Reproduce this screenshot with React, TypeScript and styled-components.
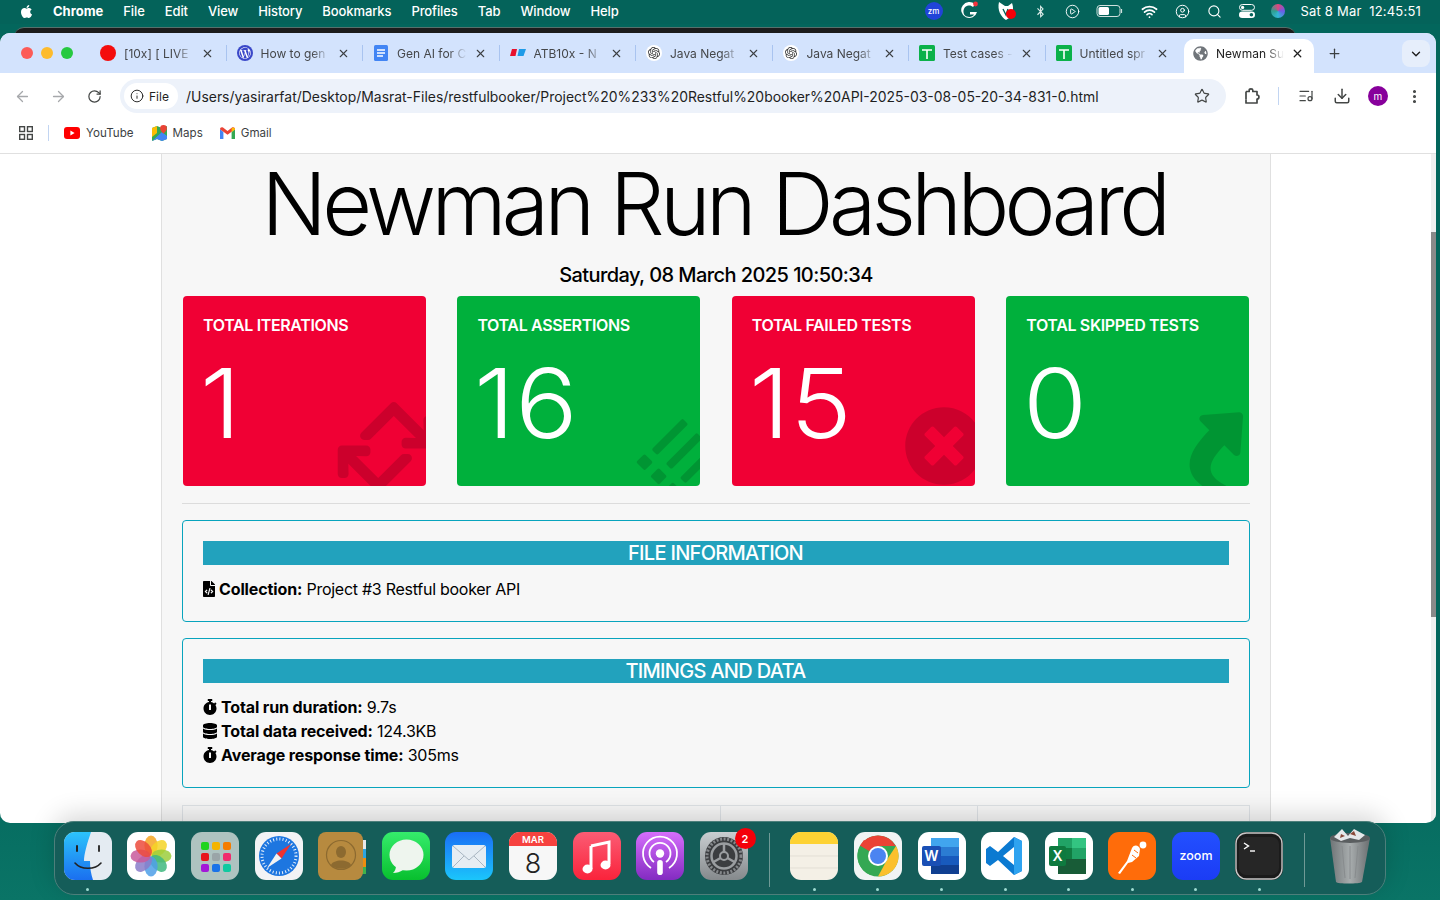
import React from "react";
import styled, { createGlobalStyle } from "styled-components";
import { FaApple, FaBluetoothB, FaDatabase, FaFileCode, FaGlobeAmericas, FaList, FaRetweet, FaShare, FaStopwatch, FaTimesCircle, FaWordpressSimple } from "react-icons/fa";
import { SiOpenai } from "react-icons/si";
import { ArrowLeft, ArrowRight, CirclePlay, CircleUser, Download, EllipsisVertical, Info, ChevronDown, Plus, RotateCw, Search, Star, Wifi, X, ListMusic } from "lucide-react";

const GlobalStyle = createGlobalStyle`
  html, body { margin: 0; padding: 0; height: 100%; overflow: hidden; }
  body { font-family: Inter, "Liberation Sans", sans-serif; }
  * { box-sizing: border-box; }
`;

const Desktop = styled.div`
  position: relative;
  width: 1440px;
  height: 900px;
  overflow: hidden;
  background: linear-gradient(180deg, #03665c 0%, #03665c 80%, #0a7466 100%);
`;

const MenuBar = styled.div`
  height: 24px;
  display: flex;
  align-items: center;
  padding: 0 19px 2px 19px;
  color: #fff;
  font-size: 13px;
  font-weight: 500;
  background: #04635a;
`;

const MenuItems = styled.div`
  display: flex;
  align-items: center;
  gap: 20px;
  margin-left: 20px;
  letter-spacing: -0.1px;
`;

const AppName = styled.span`
  font-weight: 700;
  margin-left: 19px;
`;

const StatusArea = styled.div`
  margin-left: auto;
  display: flex;
  align-items: center;
  height: 24px;
`;

const StatusIcon = styled.span<{ $w: number }>`
  width: ${(p) => p.$w}px;
  display: flex;
  align-items: center;
  justify-content: center;
`;

const Clock = styled.span`
  margin-left: 4px;
  white-space: pre;
  font-weight: 400;
  font-size: 13px;
  letter-spacing: 0.2px;
`;

const Siri = styled.span`
  width: 14px;
  height: 14px;
  border-radius: 50%;
  background: conic-gradient(#e0457b, #6b5be6, #31b7d6, #2f9e8f, #e0457b);
`;

const ZmBadge = styled.span`
  width: 18px;
  height: 18px;
  border-radius: 50%;
  background: #2144d8;
  font-size: 8px;
  font-weight: 500;
  display: flex;
  align-items: center;
  justify-content: center;
`;

const BackWindow = styled.div`
  position: absolute;
  left: 14px;
  top: 27px;
  width: 1282px;
  height: 12px;
  background: #1c1c1c;
  border-radius: 10px 10px 0 0;
  border-top: 1px solid #55706c;
`;

const Window = styled.div`
  position: absolute;
  left: 0;
  top: 33px;
  width: 1436px;
  height: 790px;
  border-radius: 10px;
  overflow: hidden;
  background: #fff;
  display: flex;
  flex-direction: column;
`;

const TabStrip = styled.div`
  height: 40px;
  background: #d3e3fd;
  display: flex;
  align-items: flex-end;
  flex: none;
`;

const Traffic = styled.div`
  width: 90px;
  height: 40px;
  display: flex;
  align-items: center;
  gap: 8px;
  padding-left: 21px;
  flex: none;
`;

const Light = styled.span<{ $c: string }>`
  width: 12px;
  height: 12px;
  border-radius: 50%;
  background: ${(p) => p.$c};
`;

const Tab = styled.div<{ $sep: boolean }>`
  position: relative;
  height: 34px;
  flex: none;
  display: flex;
  align-items: center;
  padding: 0 13px 6px 10px;
  font-size: 12px;
  color: #45474a;
  width: 136.5px;
  &::after {
    content: "";
    display: ${(p) => (p.$sep ? "block" : "none")};
    position: absolute;
    right: 0;
    top: 6px;
    width: 1px;
    height: 16px;
    background: #a9c4f0;
  }
`;

const ActiveTab = styled.div`
  height: 34px;
  flex: none;
  width: 130px;
  margin-left: 2px;
  display: flex;
  align-items: center;
  padding: 0 10px 6px 8px;
  font-size: 12px;
  color: #1f1f1f;
  background: #fff;
  border-radius: 10px 10px 0 0;
`;

const Favicon = styled.span`
  width: 16px;
  height: 16px;
  flex: none;
  display: flex;
  align-items: center;
  justify-content: center;
`;

const RoundFav = styled.span<{ $bg: string }>`
  width: 16px;
  height: 16px;
  border-radius: 50%;
  background: ${(p) => p.$bg};
  display: flex;
  align-items: center;
  justify-content: center;
`;

const TabTitle = styled.span`
  flex: 1;
  margin: 0 5px 0 8px;
  white-space: nowrap;
  overflow: hidden;
  -webkit-mask-image: linear-gradient(90deg, #000 72%, transparent 97%);
  mask-image: linear-gradient(90deg, #000 72%, transparent 97%);
`;

const NewTab = styled.span`
  width: 40px;
  height: 40px;
  flex: none;
  display: flex;
  align-items: center;
  justify-content: center;
  color: #3c4043;
`;

const TabSearch = styled.span`
  margin: 0 6px 6px auto;
  width: 28px;
  height: 27px;
  border-radius: 8px;
  background: #e6eefb;
  display: flex;
  align-items: center;
  justify-content: center;
  color: #1f1f1f;
`;

const Toolbar = styled.div`
  height: 44px;
  flex: none;
  display: flex;
  align-items: center;
  padding: 2px 0 0 4px;
  color: #444746;
`;

const NavButton = styled.span<{ $w?: number; $dim?: boolean }>`
  width: ${(p) => p.$w ?? 36}px;
  height: 32px;
  flex: none;
  display: flex;
  align-items: center;
  justify-content: center;
  color: ${(p) => (p.$dim ? "#a6a8ab" : "#444746")};
`;

const Omnibox = styled.div`
  width: 1106px;
  height: 34px;
  margin-left: 8px;
  border-radius: 17px;
  background: #edf2fa;
  display: flex;
  align-items: center;
  padding: 0 16px 0 4px;
  flex: none;
`;

const FileChip = styled.span`
  width: 54px;
  height: 26px;
  border-radius: 13px;
  background: #fff;
  display: flex;
  align-items: center;
  gap: 5px;
  padding-left: 6px;
  font-size: 12px;
  color: #1f1f1f;
`;

const UrlText = styled.span`
  margin-left: 8px;
  font-size: 13.95px;
  color: #1f1f1f;
  white-space: nowrap;
`;

const ToolbarSep = styled.span`
  width: 1px;
  height: 18px;
  background: #c2d5f2;
  flex: none;
`;

const Avatar = styled.span`
  width: 20px;
  height: 20px;
  border-radius: 50%;
  background: #87009b;
  color: #fff;
  font-size: 10px;
  display: flex;
  align-items: center;
  justify-content: center;
`;

const Bookmarks = styled.div`
  height: 37px;
  flex: none;
  display: flex;
  align-items: center;
  padding: 0 0 5px 19px;
  font-size: 11.6px;
  color: #3c3f43;
  border-bottom: 1px solid #e0e0e0;
`;

const BookmarkSep = styled.span`
  width: 1px;
  height: 16px;
  background: #c2d5f2;
  margin: 0 15px 0 15px;
`;

const Bookmark = styled.span<{ $mr: number }>`
  display: flex;
  align-items: center;
  gap: 6px;
  margin-right: ${(p) => p.$mr}px;
`;

const PageArea = styled.div`
  flex: 1;
  min-height: 0;
  display: flex;
`;

const PageScroll = styled.div`
  flex: 1;
  overflow: hidden;
  padding-left: 161px;
`;

const Scrollbar = styled.div`
  width: 5px;
  flex: none;
  background: #f0f0f0;
`;

const ScrollThumb = styled.div`
  margin-top: 78px;
  height: 385px;
  background: #8a8a8a;
`;

const Container = styled.div`
  width: 1110px;
  height: 760px;
  background: #f7f7f7;
  border-left: 1px solid #e0e0e0;
  border-right: 1px solid #e0e0e0;
  padding: 0 20px;
  color: #000;
`;

const Title = styled.h1`
  margin: -2px 0 0;
  padding: 0 4px 0 0;
  text-align: center;
  font-size: 86px;
  font-weight: 300;
  line-height: 105px;
  letter-spacing: -4.6px;
  color: #000;
  white-space: nowrap;
`;

const DateLine = styled.h5`
  margin: 3px 0 6px;
  text-align: center;
  font-size: 20px;
  font-weight: 500;
  line-height: 30px;
  letter-spacing: -0.57px;
`;

const CardGrid = styled.div`
  display: grid;
  grid-template-columns: repeat(4, 1fr);
  gap: 31.6px;
  padding: 0 1px;
`;

const Card = styled.div<{ $bg: string }>`
  position: relative;
  height: 190px;
  overflow: hidden;
  border-radius: 4px;
  background: ${(p) => p.$bg};
  color: #fff;
  padding: 20px;
`;

const CardTitle = styled.h6`
  margin: 0;
  font-size: 16px;
  font-weight: 600;
  line-height: 19px;
  text-transform: uppercase;
  letter-spacing: -0.35px;
`;

const CardNumber = styled.div`
  margin: 11px 0 0 -3px;
  font-size: 96px;
  font-weight: 300;
  line-height: 115px;
  letter-spacing: 0.5px;
  transform: scaleX(1.08);
  transform-origin: left center;
`;

const CardIcon = styled.span<{ $right: number; $bottom: number; $rotate: number }>`
  position: absolute;
  right: ${(p) => p.$right}px;
  bottom: ${(p) => p.$bottom}px;
  display: flex;
  color: rgba(0, 0, 0, 0.15);
  transform: rotate(${(p) => p.$rotate}deg);
`;

const Rule = styled.hr`
  margin: 17px 0 16px;
  border: 0;
  border-top: 1px solid #dcdcdc;
`;

const Panel = styled.section`
  border: 1px solid #08a4bd;
  border-radius: 4px;
  padding: 20px;
  & + & { margin-top: 16px; }
`;

const PanelHeader = styled.h5`
  margin: 0 0 12px;
  padding-right: 1px;
  height: 24px;
  background: #22a2bd;
  color: #fff;
  text-align: center;
  font-size: 20px;
  font-weight: 500;
  line-height: 24px;
  letter-spacing: -0.7px;
  text-transform: uppercase;
`;

const InfoLine = styled.div`
  font-size: 16px;
  line-height: 24px;
  display: flex;
  align-items: center;
  white-space: pre;
  letter-spacing: -0.27px;
`;

const InfoIcon = styled.span<{ $narrow?: boolean }>`
  display: flex;
  margin: ${(p) => (p.$narrow ? "0 2px 0 -2px" : "0 3px 0 -1px")};
`;

const Strong = styled.strong`
  font-weight: 700;
  letter-spacing: -0.12px;
`;

const SummaryRow = styled.div`
  margin-top: 17px;
  height: 60px;
  border: 1px solid #dee2e6;
  display: grid;
  grid-template-columns: 538px 257px 1fr;
`;

const SummaryCell = styled.div`
  border-right: 1px solid #dee2e6;
  &:last-child { border-right: 0; }
`;

const Dock = styled.div`
  position: absolute;
  left: 54px;
  top: 821px;
  width: 1332px;
  height: 74px;
  border-radius: 20px;
  background: #155d59;
  border: 1px solid #4d7f7b;
  box-shadow: 0 -6px 26px rgba(0, 0, 0, 0.16);
  display: flex;
  padding: 10px 0 0 1px;
`;

const DockCell = styled.div`
  position: relative;
  width: 63.6px;
  flex: none;
  display: flex;
  flex-direction: column;
  align-items: center;
`;

const Dot = styled.span<{ $on?: boolean }>`
  width: 3px;
  height: 3px;
  margin-top: 8px;
  border-radius: 50%;
  background: ${(p) => (p.$on ? "#9fdcd2" : "transparent")};
`;

const DockSep = styled.span`
  width: 1px;
  height: 54px;
  margin: 1px 13px 0 13px;
  flex: none;
  background: #6f9a96;
`;

const Badge = styled.span`
  position: absolute;
  top: -4px;
  right: 0;
  width: 21px;
  height: 21px;
  border-radius: 50%;
  background: #f40009;
  color: #fff;
  font-size: 11px;
  font-weight: 600;
  display: flex;
  align-items: center;
  justify-content: center;
`;

const AppIcon = styled.svg`
  display: block;
  overflow: visible;
`;

const Ic = ({ children }: { children: React.ReactNode }) => (
  <AppIcon width="48" height="48" viewBox="0 0 48 48">{children}</AppIcon>
);

const Finder = () => (
  <Ic>
    <defs>
      <linearGradient id="fi" x1="0" y1="0" x2="0" y2="1"><stop offset="0" stopColor="#2cc4fb" /><stop offset="1" stopColor="#1a6ff0" /></linearGradient>
      <clipPath id="fc"><rect width="48" height="48" rx="11" /></clipPath>
    </defs>
    <g clipPath="url(#fc)">
      <rect width="48" height="48" fill="#e4ebf2" />
      <path d="M0 0H27C23 12 20 22 20 29H26C26 36 27 42 29 48H0Z" fill="url(#fi)" />
    </g>
    <path d="M11 31C17 38 31 38 37 31" fill="none" stroke="#222" strokeWidth="1.6" strokeLinecap="round" />
    <rect x="12" y="13" width="2" height="7" rx="1" fill="#222" />
    <rect x="34" y="13" width="2" height="7" rx="1" fill="#333" />
  </Ic>
);

const Photos = () => {
  const colors = ["#f6a623", "#f5d327", "#9cce3c", "#3fb87f", "#4d9fe8", "#8a7cc9", "#c85a9c", "#ec4b3c"];
  return (
    <Ic>
      <rect width="48" height="48" rx="11" fill="#fff" />
      {colors.map((c, i) => (
        <ellipse key={c} cx="24" cy="13.5" rx="6.6" ry="10" fill={c} opacity="0.85" transform={`rotate(${i * 45} 24 24)`} />
      ))}
    </Ic>
  );
};

const Launchpad = () => {
  const colors = ["#1fd41f", "#f5b400", "#f57c00", "#e8141c", "#9aa5a8", "#f02b6d", "#a318d8", "#1a73e8", "#10c9a0"];
  return (
    <Ic>
      <rect width="48" height="48" rx="11" fill="#aec3c0" />
      {colors.map((c, i) => (
        <rect key={c} x={10 + (i % 3) * 11} y={10 + Math.floor(i / 3) * 11} width="8" height="8" rx="2" fill={c} />
      ))}
    </Ic>
  );
};

const Safari = () => (
  <Ic>
    <rect width="48" height="48" rx="11" fill="#f2f3f5" />
    <circle cx="24" cy="24" r="20" fill="#1d76e0" />
    <circle cx="24" cy="24" r="17" fill="none" stroke="#e8f1fb" strokeWidth="3" strokeDasharray="1 2.2" />
    <path d="M36 12L21.5 21.5L26.5 26.5Z" fill="#f0322f" />
    <path d="M12 36L21.5 21.5L26.5 26.5Z" fill="#f3f3f3" />
  </Ic>
);

const Contacts = () => (
  <Ic>
    <rect x="44" y="8" width="4" height="9" fill="#e8e8e8" />
    <rect x="44" y="17" width="4" height="9" fill="#2da5e0" />
    <rect x="44" y="26" width="4" height="9" fill="#ee8d10" />
    <rect x="44" y="35" width="4" height="7" fill="#3eb24b" />
    <rect x="0" width="45" height="48" rx="8" fill="#b78a3f" />
    <circle cx="23" cy="23" r="14.5" fill="none" stroke="#8c6a30" strokeWidth="1.2" />
    <ellipse cx="23" cy="20" rx="5" ry="6" fill="#8c6a30" />
    <path d="M13 33C15 27 31 27 33 33C29 38 17 38 13 33Z" fill="#8c6a30" />
  </Ic>
);

const Messages = () => (
  <Ic>
    <defs><linearGradient id="ms" x1="0" y1="0" x2="0" y2="1"><stop offset="0" stopColor="#35ec6c" /><stop offset="1" stopColor="#08bf2e" /></linearGradient></defs>
    <rect width="48" height="48" rx="11" fill="url(#ms)" />
    <ellipse cx="24.5" cy="23" rx="17" ry="15.5" fill="#eef5ee" />
    <path d="M14 33C14 37 13 39 11 41C15 41 18 40 21 38Z" fill="#eef5ee" />
  </Ic>
);

const Mail = () => (
  <Ic>
    <defs><linearGradient id="ml" x1="0" y1="0" x2="0" y2="1"><stop offset="0" stopColor="#1a6df5" /><stop offset="1" stopColor="#1bc6fb" /></linearGradient></defs>
    <rect width="48" height="48" rx="11" fill="url(#ml)" />
    <rect x="7" y="13" width="34" height="23" rx="2.5" fill="#e6edf3" />
    <path d="M8 14L24 28L40 14M8 35L19 24M40 35L29 24" fill="none" stroke="#a9b6c2" strokeWidth="1" />
  </Ic>
);

const Calendar = () => (
  <Ic>
    <rect width="48" height="48" rx="11" fill="#f7f7f7" />
    <path d="M0 14V11A11 11 0 0 1 11 0H37A11 11 0 0 1 48 11V14Z" fill="#f6423f" />
    <text x="24" y="11" textAnchor="middle" fontSize="9.5" fontWeight="600" fill="#fff" fontFamily="Inter, sans-serif">MAR</text>
    <text x="24" y="41" textAnchor="middle" fontSize="27" fontWeight="300" fill="#222" fontFamily="Inter, sans-serif">8</text>
  </Ic>
);

const Music = () => (
  <Ic>
    <defs><linearGradient id="mu" x1="0" y1="0" x2="0" y2="1"><stop offset="0" stopColor="#fb5c74" /><stop offset="1" stopColor="#fa233b" /></linearGradient></defs>
    <rect width="48" height="48" rx="11" fill="url(#mu)" />
    <path d="M18 14L36 10V32" fill="none" stroke="#fff" strokeWidth="3" />
    <path d="M18 14V37" fill="none" stroke="#fff" strokeWidth="3" />
    <ellipse cx="14.5" cy="37" rx="5" ry="4.4" fill="#fff" />
    <ellipse cx="32.5" cy="33" rx="5" ry="4.4" fill="#fff" />
  </Ic>
);

const Podcasts = () => (
  <Ic>
    <defs><linearGradient id="po" x1="0" y1="0" x2="0" y2="1"><stop offset="0" stopColor="#d56efc" /><stop offset="1" stopColor="#832bc1" /></linearGradient></defs>
    <rect width="48" height="48" rx="11" fill="url(#po)" />
    <path d="M15 36A17 17 0 1 1 33 36" fill="none" stroke="#fff" strokeWidth="1.8" />
    <path d="M18 30A10.5 10.5 0 1 1 30 30" fill="none" stroke="#fff" strokeWidth="1.8" />
    <circle cx="24" cy="21.5" r="4.2" fill="#fff" />
    <rect x="21.2" y="28" width="5.6" height="15" rx="2.8" fill="#fff" />
  </Ic>
);

const Settings = () => (
  <Ic>
    <defs><linearGradient id="se" x1="0" y1="0" x2="0" y2="1"><stop offset="0" stopColor="#c9ced1" /><stop offset="1" stopColor="#85898c" /></linearGradient></defs>
    <rect width="48" height="48" rx="11" fill="url(#se)" />
    <circle cx="24" cy="24" r="19" fill="#3b3d40" />
    <circle cx="24" cy="24" r="17" fill="none" stroke="#85888b" strokeWidth="3" strokeDasharray="2 1.6" />
    <circle cx="24" cy="24" r="12.5" fill="none" stroke="#9a9da0" strokeWidth="2.5" />
    <circle cx="24" cy="24" r="4" fill="none" stroke="#9a9da0" strokeWidth="2" />
    <path d="M24 20V12M27.5 26L34.5 30M20.5 26L13.5 30" stroke="#9a9da0" strokeWidth="2.5" />
  </Ic>
);

const Notes = () => (
  <Ic>
    <rect width="48" height="48" rx="11" fill="#f4f0e6" />
    <path d="M0 12V11A11 11 0 0 1 11 0H37A11 11 0 0 1 48 11V12Z" fill="#fdd233" />
    <path d="M0 24H48M0 36H48" stroke="#e3dfd5" strokeWidth="1" />
  </Ic>
);

const Chrome = () => (
  <Ic>
    <rect width="48" height="48" rx="11" fill="#f1f4f4" />
    <circle cx="24" cy="24" r="20.5" fill="#34a853" />
    <path d="M24 3.5A20.5 20.5 0 0 1 41.8 14L24 14L6.2 14A20.5 20.5 0 0 1 24 3.5Z" fill="#ea4335" />
    <path d="M6 13.8A20.5 20.5 0 0 0 16 42.8L24 24Z" fill="#34a853" />
    <path d="M42 14A20.5 20.5 0 0 1 24 44.5L34 26Z" fill="#fbc02d" />
    <path d="M15 19L6 13.5L10 8L24 14Z" fill="#ea4335" />
    <circle cx="24" cy="24" r="10" fill="#fff" />
    <circle cx="24" cy="24" r="8" fill="#4b84f1" />
  </Ic>
);

const Word = () => (
  <Ic>
    <rect width="48" height="48" rx="11" fill="#fff" />
    <rect x="13" y="6" width="28" height="9" fill="#41a5ee" />
    <rect x="13" y="15" width="28" height="9" fill="#2b7cd3" />
    <rect x="13" y="24" width="28" height="9" fill="#185abd" />
    <rect x="13" y="33" width="28" height="9" fill="#103f91" />
    <rect x="4" y="14" width="19" height="20" rx="2" fill="#1a4fb5" />
    <text x="13.5" y="29" textAnchor="middle" fontSize="14" fontWeight="600" fill="#fff" fontFamily="Inter, sans-serif">W</text>
  </Ic>
);

const VsCode = () => (
  <Ic>
    <rect width="48" height="48" rx="11" fill="#fff" />
    <path d="M33 5L41 9V39L33 43L17 28L9 34L5 31V17L9 14L17 20ZM33 15L22 24L33 33Z" fill="#0b7ad1" />
    <path d="M33 5L41 9V39L33 43Z" fill="#2ea3f0" />
  </Ic>
);

const Excel = () => (
  <Ic>
    <rect width="48" height="48" rx="11" fill="#fff" />
    <rect x="13" y="6" width="14" height="10" fill="#21a366" />
    <rect x="27" y="6" width="14" height="10" fill="#33c481" />
    <rect x="13" y="16" width="14" height="11" fill="#107c41" />
    <rect x="27" y="16" width="14" height="11" fill="#21a366" />
    <rect x="13" y="27" width="28" height="15" fill="#185c37" />
    <rect x="4" y="14" width="17" height="20" rx="2" fill="#0e7a3f" />
    <text x="12.5" y="29" textAnchor="middle" fontSize="14" fontWeight="600" fill="#fff" fontFamily="Inter, sans-serif">X</text>
  </Ic>
);

const Postman = () => (
  <Ic>
    <rect width="48" height="48" rx="11" fill="#ff6c0a" />
    <circle cx="35" cy="13" r="3.4" fill="#fff" />
    <path d="M10 41L19 29L24 16C26 12 31 13 32 17L31 24L24 30L20 31L12 42Z" fill="#fff" />
    <path d="M26 18L30 21M24 23L28 26" stroke="#ff6c0a" strokeWidth="1" />
  </Ic>
);

const ZoomApp = () => (
  <Ic>
    <defs><linearGradient id="zo" x1="0" y1="0" x2="0" y2="1"><stop offset="0" stopColor="#2350ff" /><stop offset="1" stopColor="#1b3cf5" /></linearGradient></defs>
    <rect width="48" height="48" rx="11" fill="url(#zo)" />
    <text x="24" y="28" textAnchor="middle" fontSize="12.5" fontWeight="500" fill="#fff" fontFamily="Inter, sans-serif">zoom</text>
  </Ic>
);

const Terminal = () => (
  <Ic>
    <rect width="48" height="48" rx="11" fill="#1b1b1b" />
    <rect x="1" y="1" width="46" height="46" rx="10.5" fill="none" stroke="#c7c7c7" strokeWidth="1.4" />
    <rect x="4" y="5" width="40" height="38" rx="7" fill="#262626" />
    <path d="M9 11L13.5 14L9 17" fill="none" stroke="#fff" strokeWidth="1.4" />
    <path d="M15 19H20" stroke="#fff" strokeWidth="1.4" />
  </Ic>
);

const Trash = () => (
  <Ic>
    <defs><linearGradient id="tr" x1="0" y1="0" x2="1" y2="0"><stop offset="0" stopColor="#6f7476" /><stop offset="0.5" stopColor="#a8adae" /><stop offset="1" stopColor="#6a6e70" /></linearGradient></defs>
    <path d="M4 6L10 50C11 52 34 52 36 50L44 6Z" fill="url(#tr)" />
    <ellipse cx="24" cy="6" rx="20" ry="5" fill="#5a5e60" />
    <path d="M8 5L16 -3L22 4L28 -3L39 3L33 8L24 6L15 9Z" fill="#e6e8ea" />
    <path d="M24 2L28 -1L30 4ZM15 2L19 4L14 6Z" fill="#8a4a3a" />
    <path d="M16 14L19 46M24 14V47M32 14L29 46" stroke="#888c8e" strokeWidth="1" />
  </Ic>
);

const Grammarly = () => (
  <svg width="20" height="20" viewBox="0 0 20 20">
    <path d="M16 3.5A8 8 0 1 0 18 11H11V13.5H15C14 16 9 17 6 14.5C3 11.5 4.5 5 9.5 4.5C11.5 4.3 13 5 14 6Z" fill="#fff" />
    <circle cx="16.5" cy="3" r="2.4" fill="#f0323c" />
  </svg>
);

const Malware = () => (
  <svg width="22" height="20" viewBox="0 0 22 20">
    <path d="M3 1L9 5H12L16 2C18 7 17 12 13 17L10 19C5 16 1 9 3 1Z" fill="#fff" />
    <path d="M7 8L10 14L12 8" stroke="#04635a" strokeWidth="1.4" fill="none" />
    <circle cx="15" cy="13" r="5" fill="#f40009" />
  </svg>
);

const Battery = () => (
  <svg width="28" height="14" viewBox="0 0 28 14">
    <rect x="1" y="1.5" width="23" height="11" rx="3" fill="none" stroke="#cfe0dd" strokeWidth="1" />
    <rect x="2.5" y="3" width="10.5" height="8" rx="1.6" fill="#fff" />
    <path d="M25.5 5V9" stroke="#cfe0dd" strokeWidth="1.2" />
  </svg>
);

const ControlCentre = () => (
  <svg width="16" height="14" viewBox="0 0 16 14">
    <rect x="0.5" y="0.5" width="15" height="5.8" rx="2.9" fill="none" stroke="#fff" />
    <circle cx="3.6" cy="3.4" r="1.6" fill="#fff" />
    <rect x="0" y="7.6" width="16" height="6.4" rx="3.2" fill="#fff" />
    <circle cx="12.4" cy="10.8" r="1.8" fill="#04635a" />
  </svg>
);

const ExtensionPiece = () => (
  <svg width="18" height="18" viewBox="0 0 18 18" fill="none" stroke="#444746" strokeWidth="1.7" strokeLinejoin="round">
    <path d="M3 4.5H6.2V3.2C6.2 1.4 9.8 1.4 9.8 3.2V4.5H14V8C16.6 8 16.6 12 14 12V16H3V12.5" />
    <path d="M3 4.5V12.5" />
  </svg>
);

const DocsFav = () => (
  <svg width="14" height="16" viewBox="0 0 14 16">
    <rect width="14" height="16" rx="1.5" fill="#4285f4" />
    <path d="M3 5H11M3 8H11M3 11H9" stroke="#fff" strokeWidth="1.5" />
  </svg>
);

const AtbFav = () => (
  <svg width="16" height="10" viewBox="0 0 16 10">
    <path d="M2 1H7L5.5 8H0Z" fill="#e8112d" />
    <path d="M9 1H16L13.5 8H7.5Z" fill="#1e9be8" />
  </svg>
);

const SheetsFav = () => (
  <svg width="16" height="16" viewBox="0 0 16 16">
    <rect width="16" height="16" rx="1.5" fill="#0bb14a" />
    <path d="M3 5H13M8 5V14" stroke="#fff" strokeWidth="1.6" />
  </svg>
);

const YouTubeFav = () => (
  <svg width="16" height="12" viewBox="0 0 16 12">
    <rect width="16" height="12" rx="3" fill="#f00" />
    <path d="M6.4 3.5L10.6 6L6.4 8.5Z" fill="#fff" />
  </svg>
);

const MapsFav = () => (
  <svg width="15" height="16" viewBox="0 0 15 16">
    <path d="M0 3L5 1L10 3L15 1V14L10 16L5 14L0 16Z" fill="#34a853" />
    <path d="M0 3L5 1V8L0 12Z" fill="#fbbc04" />
    <path d="M0 16L10 7L15 11V14L10 16L5 14Z" fill="#4285f4" />
    <path d="M11.5 0A3.4 3.4 0 0 0 8.1 3.4C8.1 5.6 11.5 8.5 11.5 8.5S14.9 5.6 14.9 3.4A3.4 3.4 0 0 0 11.5 0Z" fill="#ea4335" />
  </svg>
);

const GmailFav = () => (
  <svg width="15" height="12" viewBox="0 0 15 12">
    <path d="M0 2V12H3.4V5Z" fill="#4285f4" />
    <path d="M15 2V12H11.6V5Z" fill="#34a853" />
    <path d="M0 2.2C0 .6 1.6 -.4 3 .6L7.5 4L12 .6C13.4 -.4 15 .6 15 2.2L7.5 7.8Z" fill="#ea4335" />
    <path d="M11.6 1V5L15 2.4C15 .8 13.4 -.4 11.6 1Z" fill="#fbbc04" />
  </svg>
);

const AppsGrid = () => (
  <svg width="14" height="14" viewBox="0 0 14 14" fill="none" stroke="#444746" strokeWidth="1.4">
    <rect x="0.7" y="0.7" width="4.8" height="4.8" />
    <rect x="8.5" y="0.7" width="4.8" height="4.8" />
    <rect x="0.7" y="8.5" width="4.8" height="4.8" />
    <rect x="8.5" y="8.5" width="4.8" height="4.8" />
  </svg>
);

const tabs = [
  { title: "[10x] [ LIVE", icon: <RoundFav $bg="#f40d0d" /> },
  { title: "How to gen", icon: <RoundFav $bg="#3a48c9"><FaWordpressSimple size={12} color="#fff" /></RoundFav> },
  { title: "Gen AI for C", icon: <DocsFav /> },
  { title: "ATB10x - N", icon: <AtbFav /> },
  { title: "Java Negat", icon: <RoundFav $bg="#fff"><SiOpenai size={12} color="#333" /></RoundFav> },
  { title: "Java Negat", icon: <RoundFav $bg="#fff"><SiOpenai size={12} color="#333" /></RoundFav> },
  { title: "Test cases -", icon: <SheetsFav /> },
  { title: "Untitled spr", icon: <SheetsFav /> },
];

const menus = ["File", "Edit", "View", "History", "Bookmarks", "Profiles", "Tab", "Window", "Help"];

const cards = [
  { title: "Total Iterations", value: "1", bg: "#f00034", icon: <FaRetweet size={110} />, right: -15, bottom: -16, rotate: -45 },
  { title: "Total Assertions", value: "16", bg: "#00b03c", icon: <FaList size={64} />, right: -9, bottom: -4, rotate: -45 },
  { title: "Total Failed Tests", value: "15", bg: "#f00034", icon: <FaTimesCircle size={80} />, right: -9, bottom: 0, rotate: 0 },
  { title: "Total Skipped Tests", value: "0", bg: "#00b03c", icon: <FaShare size={80} />, right: -10, bottom: -1, rotate: -45 },
];

const dockLeft = [
  { el: <Finder />, on: true }, { el: <Photos /> }, { el: <Launchpad /> }, { el: <Safari /> }, { el: <Contacts /> }, { el: <Messages /> },
  { el: <Mail /> }, { el: <Calendar /> }, { el: <Music /> }, { el: <Podcasts /> }, { el: <Settings />, badge: "2" },
];

const dockRight = [
  <Notes />, <Chrome />, <Word />, <VsCode />, <Excel />, <Postman />, <ZoomApp />, <Terminal />,
];

export default function App() {
  return (
    <Desktop>
      <GlobalStyle />
      <MenuBar>
        <FaApple size={15} />
        <AppName>Chrome</AppName>
        <MenuItems>
          {menus.map((m) => <span key={m}>{m}</span>)}
        </MenuItems>
        <StatusArea>
          <StatusIcon $w={34}><ZmBadge>zm</ZmBadge></StatusIcon>
          <StatusIcon $w={36}><Grammarly /></StatusIcon>
          <StatusIcon $w={40}><Malware /></StatusIcon>
          <StatusIcon $w={28}><FaBluetoothB size={13} color="#dfeeeb" /></StatusIcon>
          <StatusIcon $w={36}><CirclePlay size={15} color="#fff" strokeWidth={1.5} /></StatusIcon>
          <StatusIcon $w={38}><Battery /></StatusIcon>
          <StatusIcon $w={42}><Wifi size={17} color="#fff" strokeWidth={2.4} /></StatusIcon>
          <StatusIcon $w={24}><CircleUser size={15} color="#fff" strokeWidth={1.6} /></StatusIcon>
          <StatusIcon $w={40}><Search size={15} color="#fff" strokeWidth={1.8} /></StatusIcon>
          <StatusIcon $w={24}><ControlCentre /></StatusIcon>
          <StatusIcon $w={38}><Siri /></StatusIcon>
          <Clock>Sat 8 Mar  12:45:51</Clock>
        </StatusArea>
      </MenuBar>
      <BackWindow />
      <Window>
        <TabStrip>
          <Traffic>
            <Light $c="#fc5b57" />
            <Light $c="#fdbb2d" />
            <Light $c="#26c940" />
          </Traffic>
          {tabs.map((t, i) => (
            <Tab key={i} $sep={i < tabs.length - 1}>
              <Favicon>{t.icon}</Favicon>
              <TabTitle>{t.title}</TabTitle>
              <X size={13} strokeWidth={2} color="#3c4043" />
            </Tab>
          ))}
          <ActiveTab>
            <Favicon><FaGlobeAmericas size={15} color="#70757a" /></Favicon>
            <TabTitle>Newman Su</TabTitle>
            <X size={13} strokeWidth={2.4} color="#1f1f1f" />
          </ActiveTab>
          <NewTab><Plus size={15} strokeWidth={2} /></NewTab>
          <TabSearch><ChevronDown size={14} strokeWidth={2.4} /></TabSearch>
        </TabStrip>
        <Toolbar>
          <NavButton $dim><ArrowLeft size={17} strokeWidth={1.8} /></NavButton>
          <NavButton $dim><ArrowRight size={17} strokeWidth={1.8} /></NavButton>
          <NavButton><RotateCw size={15} strokeWidth={2} /></NavButton>
          <Omnibox>
            <FileChip><Info size={14} strokeWidth={1.6} />File</FileChip>
            <UrlText>/Users/yasirarfat/Desktop/Masrat-Files/restfulbooker/Project%20%233%20Restful%20booker%20API-2025-03-08-05-20-34-831-0.html</UrlText>
            <Star size={16} strokeWidth={1.8} color="#444746" style={{ marginLeft: "auto" }} />
          </Omnibox>
          <NavButton $w={52}><ExtensionPiece /></NavButton>
          <ToolbarSep />
          <NavButton $w={54}><ListMusic size={16} strokeWidth={1.8} /></NavButton>
          <NavButton $w={18}><Download size={18} strokeWidth={2} /></NavButton>
          <NavButton $w={54}><Avatar>m</Avatar></NavButton>
          <NavButton $w={18}><EllipsisVertical size={17} strokeWidth={2.4} /></NavButton>
        </Toolbar>
        <Bookmarks>
          <AppsGrid />
          <BookmarkSep />
          <Bookmark $mr={18}><YouTubeFav />YouTube</Bookmark>
          <Bookmark $mr={17}><MapsFav />Maps</Bookmark>
          <Bookmark $mr={0}><GmailFav />Gmail</Bookmark>
        </Bookmarks>
        <PageArea>
          <PageScroll>
            <Container>
              <Title>Newman Run Dashboard</Title>
              <DateLine>Saturday, 08 March 2025 10:50:34</DateLine>
              <CardGrid>
                {cards.map((c) => (
                  <Card key={c.title} $bg={c.bg}>
                    <CardTitle>{c.title}</CardTitle>
                    <CardNumber>{c.value}</CardNumber>
                    <CardIcon $right={c.right} $bottom={c.bottom} $rotate={c.rotate}>{c.icon}</CardIcon>
                  </Card>
                ))}
              </CardGrid>
              <Rule />
              <Panel>
                <PanelHeader>File Information</PanelHeader>
                <InfoLine><InfoIcon $narrow><FaFileCode size={16} /></InfoIcon><Strong>Collection:</Strong> Project #3 Restful booker API</InfoLine>
              </Panel>
              <Panel>
                <PanelHeader>Timings and Data</PanelHeader>
                <InfoLine><InfoIcon><FaStopwatch size={16} /></InfoIcon><Strong>Total run duration:</Strong> 9.7s</InfoLine>
                <InfoLine><InfoIcon><FaDatabase size={16} /></InfoIcon><Strong>Total data received:</Strong> 124.3KB</InfoLine>
                <InfoLine><InfoIcon><FaStopwatch size={16} /></InfoIcon><Strong>Average response time:</Strong> 305ms</InfoLine>
              </Panel>
              <SummaryRow>
                <SummaryCell />
                <SummaryCell />
                <SummaryCell />
              </SummaryRow>
            </Container>
          </PageScroll>
          <Scrollbar><ScrollThumb /></Scrollbar>
        </PageArea>
      </Window>
      <Dock>
        {dockLeft.map((d, i) => (
          <DockCell key={i}>
            {d.el}
            {d.badge && <Badge>{d.badge}</Badge>}
            <Dot $on={d.on} />
          </DockCell>
        ))}
        <DockSep />
        {dockRight.map((el, i) => (
          <DockCell key={i}>
            {el}
            <Dot $on />
          </DockCell>
        ))}
        <DockSep />
        <DockCell><Trash /></DockCell>
      </Dock>
    </Desktop>
  );
}
